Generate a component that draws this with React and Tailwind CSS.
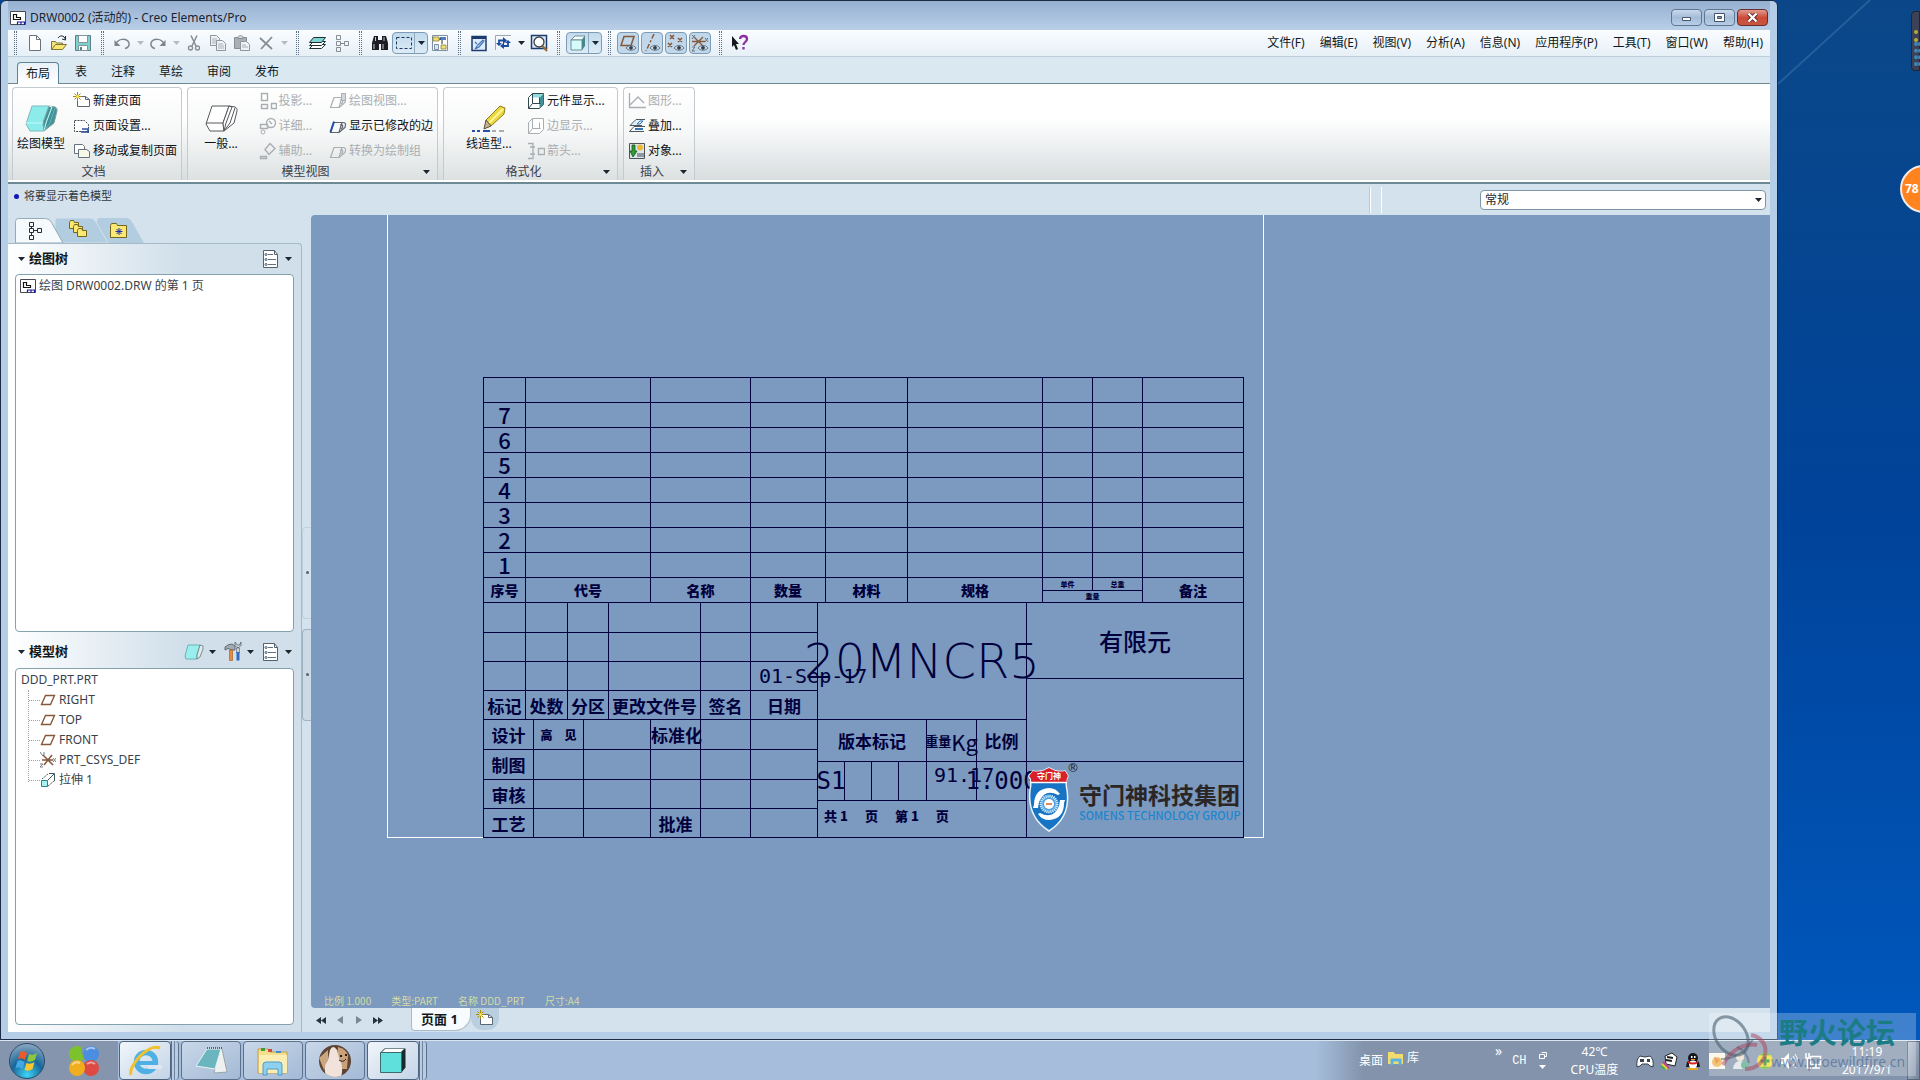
/* ---------- small helpers ---------- */

function Icon({ w = 18, h = 18, box, children }) {
  return (
    <svg
      width={w}
      height={h}
      viewBox={box || `0 0 ${w} ${h}`}
      fill="none"
      className="shrink-0"
      aria-hidden="true"
    >
      {children}
    </svg>
  );
}

function Caret({ color = "#1c2630" }) {
  return (
    <Icon w={7} h={4}>
      <path d="M0 0h7L3.5 4z" fill={color} />
    </Icon>
  );
}

/* ---------- icons ---------- */

const NewIcon = () => (
  <Icon>
    <path d="M3.500 1.500h7l4 4v11h-11z" fill="#fff" stroke="#6b7178" />
    <path d="M10.500 1.500v4h4" stroke="#6b7178" />
  </Icon>
);

const OpenIcon = () => (
  <Icon>
    <path d="M1.500 15.500v-8h4l1 1.500h6v2" fill="#f6e27a" stroke="#7d7440" />
    <path d="M1.500 15.500l4-5h11l-4 5z" fill="#f7e56e" stroke="#7d7440" />
    <path d="M8 4c2-3 6-3 7.500 1.500M15.500 6V2M15.500 6l-3.500-1" stroke="#222b38" />
  </Icon>
);

const SaveIcon = () => (
  <Icon>
    <path d="M1.500 1.500h15v15h-15z" fill="#7fd0ce" stroke="#5a7f86" />
    <path d="M4.500 1.500h9v7h-9z" fill="#fff" stroke="#7d979c" />
    <path d="M4.500 11.500h9v5h-9z" fill="#fff" stroke="#7d979c" />
    <path d="M6 13h2v3H6z" fill="#5a7f86" />
  </Icon>
);

const UndoIcon = ({ flip }) => (
  <Icon>
    <g transform={flip ? "translate(18 0) scale(-1 1)" : undefined}>
      <path d="M3 10c2-6 11-6 13-1 .7 2.500-1 5-4 5.500" stroke="#7d858e" strokeWidth="1.500" />
      <path d="M1.500 6v6h6z" fill="#7d858e" />
    </g>
  </Icon>
);

const CutIcon = () => (
  <Icon>
    <path d="M6 1.500L11 12M12 1.500L7 12" stroke="#858c94" strokeWidth="1.500" />
    <circle cx="5.500" cy="14" r="2" stroke="#858c94" strokeWidth="1.300" />
    <circle cx="12.500" cy="14" r="2" stroke="#858c94" strokeWidth="1.300" />
  </Icon>
);

const CopyIcon = () => (
  <Icon>
    <path d="M1.500 1.500h6l3 3v7h-9z" fill="#eef2f6" stroke="#8e959d" />
    <path d="M3 5h5M3 7h5M3 9h5" stroke="#a9b0b7" />
    <path d="M7.500 6.500h6l3 3v7h-9z" fill="#eef2f6" stroke="#8e959d" />
    <path d="M9 10h5M9 12h6M9 14h6" stroke="#a9b0b7" />
  </Icon>
);

const PasteIcon = () => (
  <Icon>
    <path d="M1.500 3.500h12v11h-12z" fill="#a9afb5" stroke="#878e96" />
    <path d="M5 3.500c0-2.500 5-2.500 5 0v1H5z" fill="#d6dadf" stroke="#878e96" />
    <path d="M7.500 7.500h6l3 3v6h-9z" fill="#eef2f6" stroke="#8e959d" />
    <path d="M9 11h4M9 13h6" stroke="#a9b0b7" />
  </Icon>
);

const DeleteIcon = () => (
  <Icon>
    <path d="M3 4l12 11M15 3L4 15" stroke="#858c94" strokeWidth="1.800" />
  </Icon>
);

const LayersIcon = () => (
  <Icon>
    <path d="M1.500 14.500l4-4h12l-4 4z" fill="#fff" stroke="#1e3338" />
    <path d="M1.500 11.500l4-4h12l-4 4z" fill="#fff" stroke="#1e3338" />
    <path d="M1.500 8.500l4-5h12l-4 5z" fill="#7fd4d2" stroke="#1e3338" />
  </Icon>
);

const TreeIcon = ({ color = "#858c94" }) => (
  <Icon>
    <path d="M4.500 1.500h4v4h-4zM4.500 7.500h4v4h-4zM4.500 13.500h4v4h-4zM12.500 7.500h4v4h-4zM8.500 9.500h4" stroke={color} />
  </Icon>
);

const FindIcon = () => (
  <Icon>
    <path d="M3 2h4v4l1 2v8H1V9zM11 2h4l2 7v7h-7V8l1-2z" fill="#1b1d22" />
    <path d="M7 6h4v4H7z" fill="#1b1d22" />
    <path d="M3 10v5M12 10v5M4.500 3v4M13 3v4" stroke="#c3c9cf" />
  </Icon>
);

const SelectIcon = () => (
  <Icon>
    <path d="M1.500 3.500h15v11h-15z" stroke="#1f3556" strokeDasharray="3 2" />
  </Icon>
);

const FramesIcon = () => (
  <Icon>
    <path d="M1.500 1.500h15v15h-15z" fill="#fff" stroke="#7b8fa5" />
    <path d="M2 3h6v4H2zM10 11h5v4h-5z" fill="#f1e074" stroke="#8d7f36" strokeWidth=".8" />
    <path d="M9 3h6v3H9z" fill="#4f7dc0" />
    <path d="M11 6v4M8 5h2" stroke="#22303c" />
    <path d="M3.500 10.500h4v5h-4z" fill="#dfe6ee" stroke="#7b8fa5" />
  </Icon>
);

const RepaintIcon = () => (
  <Icon>
    <path d="M2 2.500h14v14H2z" fill="#dcebfa" stroke="#1d3c6e" strokeWidth="1.500" />
    <path d="M2 2h14v3H2z" fill="#1d3c6e" />
    <path d="M5 15l4-2 5-6-1-1-5 5zM5 8l2 2" stroke="#4675b5" strokeWidth="1.200" />
  </Icon>
);

const SpinIcon = () => (
  <Icon>
    <path d="M1.500 16V1.500H17" stroke="#9aa8b6" />
    <path d="M5 11V6.500h5M14 7v5H9" stroke="#1b4c9c" strokeWidth="1.800" />
    <path d="M9 3l4 3.500L9 10zM10 8.500V15l-4-3zM2 9h6l-3 3z" fill="#1b4c9c" />
    <path d="M11 9h6l-3-3z" fill="#1b4c9c" />
  </Icon>
);

const ZoomIcon = () => (
  <Icon>
    <path d="M1.500 1.500h15v13h-15z" fill="#dcebfa" stroke="#1d3c6e" strokeWidth="1.500" />
    <circle cx="9" cy="8" r="5" fill="#fff" stroke="#3b3f46" strokeWidth="1.300" />
    <path d="M12.500 12l4.500 5" stroke="#9c6b33" strokeWidth="2.200" />
  </Icon>
);

const CubeIcon = () => (
  <Icon>
    <path d="M2 6l4-4h10l-3 4z" fill="#f4ffff" stroke="#5c7a80" strokeWidth=".8" />
    <path d="M13 6l3-4v10l-3 4z" fill="#45898d" />
    <path d="M2 6h11v10H2z" fill="#d5fafa" stroke="#5c7a80" strokeWidth=".8" />
  </Icon>
);

const Eye = () => (
  <g>
    <path d="M7 14c2.500-3.500 7.500-3.500 10 0-2.500 3-7.500 3-10 0z" fill="#cfdae4" stroke="#54616d" strokeWidth=".8" />
    <circle cx="12" cy="13.800" r="1.900" fill="#2f3e4c" />
  </g>
);

const PlaneEye = () => (
  <Icon>
    <path d="M5 2.500h10l-3 9H2z" stroke="#86583a" strokeWidth="1.500" />
    <Eye />
  </Icon>
);

const AxisEye = () => (
  <Icon>
    <path d="M11 0L3 17" stroke="#86583a" strokeWidth="1.500" strokeDasharray="5 2 2 2" />
    <Eye />
  </Icon>
);

const PointEye = () => (
  <Icon>
    <path d="M3 1l4 4M7 1L3 5M11 4l4 4M15 4l-4 4M1 9l4 4M5 9l-4 4" stroke="#86583a" strokeWidth="1.500" />
    <Eye />
  </Icon>
);

const CsysEye = () => (
  <Icon>
    <path d="M3 3l9 9M12 3l-9 9M1 7.500h13" stroke="#86583a" strokeWidth="1.300" />
    <path d="M1 1l3 3M4 1L1 5M14 4l3 4M17 4l-3 4M1 13h3l-3 4h3" stroke="#68727c" />
    <Eye />
  </Icon>
);

const HelpIcon = () => (
  <Icon>
    <path d="M1 2l7 8H5l2 5-2 1-2-5-2 2z" fill="#16181c" />
    <path d="M9 5c0-4 7-4 7 0 0 3-3.500 3-3.500 6M12.500 13v2.500" stroke="#8c2fa0" strokeWidth="2.300" />
  </Icon>
);

const Sparkle = () => (
  <g>
    <path d="M4.500 0v9M0 4.500h9M1.500 1.500l6 6M7.500 1.500l-6 6" stroke="#a8870c" strokeWidth="1" />
    <circle cx="4.500" cy="4.500" r="1.500" fill="#ffe94a" />
  </g>
);

const NewSheetIcon = () => (
  <Icon>
    <path d="M4.500 4.500h8l4 3v7h-12z" fill="#fff" stroke="#5c6670" />
    <path d="M12.500 4.500v3h4" stroke="#5c6670" />
    <Sparkle />
  </Icon>
);

const SheetSetupIcon = () => (
  <Icon>
    <path d="M1.500 3.500h10l4 4v7h-14z" fill="#fff" stroke="#3d4650" strokeDasharray="2 1" />
    <path d="M8 15h8M9 12h6v4" stroke="#2c4f9e" strokeWidth="1.600" />
  </Icon>
);

const MoveSheetIcon = () => (
  <Icon>
    <path d="M1.500 2.500h8l2 2v7h-10z" fill="#fff" stroke="#68727c" />
    <path d="M5.500 7.500h8l3 2v6h-11z" fill="#f6f8ea" stroke="#68727c" />
  </Icon>
);

const BigBlock = ({ filled }) => (
  <Icon w={34} h={30}>
    <path d="M8 3h17L19 20l1 8H6l-4-7z" fill={filled ? "#8cecec" : "#fff"} stroke={filled ? "#7fb9bd" : "#55585c"} />
    <path d="M25 3l6 1c2 1 2 2 2 4l-3 12-10 8-1-8z" fill={filled ? "#3f9398" : "#fff"} stroke={filled ? "#7f9ea1" : "#55585c"} />
    <path d="M25 3l3 1-6 16-2 8" stroke={filled ? "#d5fbfb" : "#55585c"} />
    <path d="M2 20h17" stroke={filled ? "#c9fafa" : "#55585c"} />
    <path d="M31 5l-5 15-6 8" stroke={filled ? "#69b3b6" : "#55585c"} />
  </Icon>
);

const PencilIcon = () => (
  <Icon w={36} h={30}>
    <path d="M15 17L29 3l5 2-1 6-13 12z" fill="#ecd83a" stroke="#8d7d1e" />
    <path d="M18 20L32 6" stroke="#fff79c" strokeWidth="2" />
    <path d="M15 17l5 6-7 3z" fill="#c9b28e" stroke="#5b5140" />
    <path d="M1 28h3M6 28h3M12 28h7" stroke="#2450a8" strokeWidth="2" />
    <path d="M21 28h4M28 28h5" stroke="#a7adb3" strokeWidth="2" />
  </Icon>
);

const GREY = "#a9aeb2";

const ProjIcon = () => (
  <Icon>
    <path d="M2.500 1.500h6v7h-6zM2.500 12.500h6v4h-6zM12.500 11.500h5v5h-5z" stroke={GREY} strokeWidth="1.400" />
  </Icon>
);

const DetailIcon = () => (
  <Icon>
    <circle cx="12" cy="6" r="4.500" stroke={GREY} strokeWidth="1.400" />
    <path d="M1.500 7.500h7v4h-7zM10 4l3 3" stroke={GREY} strokeWidth="1.400" />
    <circle cx="4" cy="15" r="2" stroke={GREY} />
  </Icon>
);

const AuxIcon = () => (
  <Icon>
    <path d="M11 1.500l5 5-6 6-4-5zM1.500 14.500h6v2h-6z" stroke={GREY} strokeWidth="1.400" />
  </Icon>
);

const ViewIcon = ({ color = GREY, accent, tall }) => (
  <Icon>
    <path d="M5 5.500h8l-3 10H1.500z" stroke={color} strokeWidth="1.200" />
    <path d="M13 5.500c4 0 4 1 3 5l-6 5M11 8c3-1 4 2 1 4" stroke={color} strokeWidth="1.200" />
    {accent && <path d="M5 4.500L1.500 15" stroke="#2450a8" strokeWidth="2" />}
    {tall && <path d="M12.500 1.500h4v7h-4z" fill="#d3d7da" stroke={color} />}
  </Icon>
);

const CompIcon = ({ off }) => (
  <Icon>
    <path d="M1.500 5.500l4-4h11v11l-4 4h-11z" stroke={off ? GREY : "#33474f"} fill="#fff" />
    {!off && <path d="M12.500 5.500l4-4v11l-4 4z" fill="#3f9398" />}
    {!off && <path d="M5.500 2h10l-3 3.500h-7z" fill="#8fdcdc" />}
    <path d="M5.500 1.500v10h8M5.500 11.500l-4 5M12.500 5.500v6" stroke={off ? GREY : "#33474f"} />
  </Icon>
);

const ArrowsIcon = () => (
  <Icon>
    <path d="M1 1.500h5v15H1M3 5h5M3 12h5M11.500 6.500h6v6h-6z" stroke={GREY} strokeWidth="1.300" />
  </Icon>
);

const GraphIcon = () => (
  <Icon>
    <path d="M1.500 1v14.500H18M2 13l8-8 6 6" stroke={GREY} strokeWidth="1.300" />
  </Icon>
);

const OverlayIcon = () => (
  <Icon>
    <path d="M17 9.500H6l-4.500 5H16" stroke="#4d565e" />
    <path d="M17 2.500H8l-6 6h12" fill="#e3f0f9" stroke="#4d565e" />
    <path d="M9 7l3-3h3l-3 3z" stroke="#3576b5" />
    <path d="M7 12h8" stroke="#3576b5" strokeWidth="2" />
  </Icon>
);

const ObjectIcon = () => (
  <Icon>
    <path d="M1.500 1.500h15v15h-15z" fill="#dfe5e9" stroke="#4d5459" />
    <circle cx="12" cy="5.500" r="3" fill="#e9b93a" />
    <path d="M4 3h3v6h2l-4 6-3-6h2z" fill="#2f9a36" stroke="#145419" strokeWidth=".8" />
    <path d="M9 11h7v4H9z" fill="#8d989f" />
  </Icon>
);

const DrwIcon = () => (
  <Icon w={16} h={16}>
    <path d="M.5 1.500h15v13H.5z" fill="#fff" stroke="#4a4a55" />
    <path d="M3.500 4.500v5h7V7.500H6.500v-3z" stroke="#111" strokeWidth="1.200" />
    <path d="M7.500 14.500v-2.500h7v3M11 12v3" stroke="#1b1b9a" strokeWidth="1.200" />
  </Icon>
);

const PlaneIcon = () => (
  <Icon w={16} h={16}>
    <path d="M5.500 3.500h9l-4 9h-9z" stroke="#86583a" strokeWidth="1.400" />
  </Icon>
);

const CsysIcon = () => (
  <Icon w={16} h={16}>
    <path d="M3 3l10 10M12 3L4 13M2 8h11" stroke="#86583a" strokeWidth="1.500" />
    <path d="M0 0l3 4M4 0v3M0 12h3l-3 3h3M13 6l3 4M16 6l-3 4" stroke="#6b747c" strokeWidth=".9" />
  </Icon>
);

const ExtrudeIcon = () => (
  <Icon w={16} h={16}>
    <path d="M1.500 8.500h6v6h-6z" fill="#a9f1ef" stroke="#2c8385" />
    <path d="M2 7l6-5M8 14l6-5" stroke="#3e5a5c" strokeDasharray="2 1" />
    <path d="M8 8l6-6M9 1.500h5.500V9" stroke="#3e5a5c" />
  </Icon>
);

const ListIcon = () => (
  <Icon>
    <path d="M1.500.5h11l3 4v13h-14z" fill="#fff" stroke="#56606a" />
    <path d="M12.500.5v4h3" stroke="#56606a" />
    <path d="M6 4.500h5M6 9.500h8M6 14.500h8" stroke="#5f7286" />
    <circle cx="4" cy="4.500" r="1" stroke="#45576a" />
    <circle cx="4" cy="9.500" r="1" stroke="#45576a" />
    <circle cx="4" cy="14.500" r="1" stroke="#45576a" />
  </Icon>
);

const ToolsIcon = () => (
  <Icon w={18} h={20}>
    <path d="M1 8V5q3-3 7-3l3 2v4H8L4 6.500z" fill="#a3abb2" stroke="#4d565e" strokeWidth=".8" />
    <path d="M5.500 8h3v10.500h-3z" fill="#e88b3a" stroke="#9c5a22" strokeWidth=".6" />
    <path d="M11 0q-1 4 2 5.500h2Q18 4 17 0l-1.500 3h-2z" fill="#c9d0d7" stroke="#59636d" strokeWidth=".8" />
    <path d="M12.500 6h3v5h-3z" fill="#c9d0d7" stroke="#59636d" strokeWidth=".6" />
    <path d="M12.500 10h3v8.500h-3z" fill="#2d6bc4" />
  </Icon>
);

const SmallBlock = () => (
  <Icon w={20} h={18}>
    <path d="M4 2h12l-3 10v4H2l-1-3z" fill="#9aefee" stroke="#5ea3a8" strokeWidth=".8" />
    <path d="M16 2l3 1v3l-3 8-3 2v-4z" fill="#dcecec" stroke="#68797a" strokeWidth=".8" />
  </Icon>
);

const FoldersIcon = () => (
  <Icon w={20} h={20}>
    {[0, 4, 8].map((d) => (
      <path key={d} d={`M${d + 1}.5 ${d + 2}.5l1-2h3l1 2h4v6h-9z`} fill="#fbe872" stroke="#75661f" />
    ))}
  </Icon>
);

const FavIcon = () => (
  <Icon>
    <path d="M.5 3.500l1-2h5l1 2h9v12H.5z" fill="#fbe872" stroke="#75661f" />
    <path d="M9 6v7M5.500 9.500h7M6.500 7l5 5M11.500 7l-5 5" stroke="#1e2fa8" />
  </Icon>
);

/* ---------- top bars ---------- */

function WindowButton({ label, red, children }) {
  return (
    <button
      aria-label={label}
      className={
        red
          ? "flex h-[17px] w-[31px] items-center justify-center rounded-sm border border-[#6b2a2c] bg-linear-to-b from-[#e09a8e] via-[#cc4a38] to-[#c8563f]"
          : "flex h-[17px] w-[31px] items-center justify-center rounded-sm border border-[#5f7690] bg-linear-to-b from-[#c8d9ec] via-[#a5bcd8] to-[#b8cde5]"
      }
    >
      {children}
    </button>
  );
}

function TitleBar() {
  return (
    <header className="flex h-[29px] items-center bg-linear-to-b from-[#96b0d0] to-[#b9cfe8] pr-[2px] pl-[2px] pt-1">
      <DrwIcon />
      <h1 className="ml-1 flex-1 text-[12px] text-[#1a2430]">DRW0002 (活动的) - Creo Elements/Pro</h1>
      <div className="flex gap-[2px]">
        <WindowButton label="最小化">
          <Icon w={11} h={9}>
            <path d="M1.500 4.500h8v3h-8z" fill="#fff" stroke="#45566c" />
          </Icon>
        </WindowButton>
        <WindowButton label="最大化">
          <Icon w={11} h={9}>
            <path d="M.5.5h10v8H.5z" fill="#fff" stroke="#45566c" />
            <path d="M3.500 3.500h4v2h-4z" fill="#8aa2c0" stroke="#45566c" />
          </Icon>
        </WindowButton>
        <WindowButton label="关闭" red>
          <Icon w={11} h={9}>
            <path d="M1.500.5l8 8M9.500.5l-8 8" stroke="#5b2326" strokeWidth="4" />
            <path d="M1.500.5l8 8M9.500.5l-8 8" stroke="#fff" strokeWidth="2.300" />
          </Icon>
        </WindowButton>
      </div>
    </header>
  );
}

function Grip() {
  return (
    <div className="flex w-[15px] shrink-0 justify-center">
      <div className="h-6 w-[3px] border-x border-dotted border-[#5d7186]" />
    </div>
  );
}

function Tool({ label, children }) {
  return (
    <button aria-label={label} className="flex h-6 w-6 shrink-0 items-center justify-center">
      {children}
    </button>
  );
}

function ToolCaret({ off }) {
  return (
    <span className="flex w-3 shrink-0 justify-center">
      <Caret color={off ? "#b3bcc5" : "#1c2630"} />
    </span>
  );
}

function SplitTool({ label, children }) {
  return (
    <button
      aria-label={label}
      className="flex h-[22px] w-9 shrink-0 items-center rounded-sm border border-[#7d9bb5] bg-linear-to-b from-[#c2daec] to-[#dcecf7]"
    >
      <span className="flex h-full w-[22px] items-center justify-center border-r border-[#8fabc2]">{children}</span>
      <ToolCaret />
    </button>
  );
}

function Toggle({ label, children }) {
  return (
    <button
      aria-label={label}
      className="mr-[2px] flex h-[22px] w-[22px] shrink-0 items-center justify-center rounded-sm border border-[#7d9bb5] bg-[#c0d8ea]"
    >
      {children}
    </button>
  );
}

const menus = ["文件(F)", "编辑(E)", "视图(V)", "分析(A)", "信息(N)", "应用程序(P)", "工具(T)", "窗口(W)", "帮助(H)"];

function ToolBar() {
  return (
    <div className="flex h-[27px] items-center justify-between border-b border-[#bccddb] bg-linear-to-b from-[#fafdff] to-[#e6f0f7]">
      <div className="flex items-center">
        <Grip />
        <Tool label="新建"><NewIcon /></Tool>
        <Tool label="打开"><OpenIcon /></Tool>
        <Tool label="保存"><SaveIcon /></Tool>
        <Grip />
        <Tool label="撤消"><UndoIcon /></Tool>
        <ToolCaret off />
        <Tool label="重做"><UndoIcon flip /></Tool>
        <ToolCaret off />
        <Tool label="剪切"><CutIcon /></Tool>
        <Tool label="复制"><CopyIcon /></Tool>
        <Tool label="粘贴"><PasteIcon /></Tool>
        <Tool label="删除"><DeleteIcon /></Tool>
        <ToolCaret off />
        <Grip />
        <Tool label="层"><LayersIcon /></Tool>
        <Tool label="树"><TreeIcon /></Tool>
        <Grip />
        <Tool label="查找"><FindIcon /></Tool>
        <SplitTool label="选取"><SelectIcon /></SplitTool>
        <Tool label="选项"><FramesIcon /></Tool>
        <Grip />
        <Tool label="重画"><RepaintIcon /></Tool>
        <Tool label="更新"><SpinIcon /></Tool>
        <ToolCaret />
        <Tool label="缩放"><ZoomIcon /></Tool>
        <Grip />
        <SplitTool label="着色"><CubeIcon /></SplitTool>
        <Grip />
        <Toggle label="平面显示"><PlaneEye /></Toggle>
        <Toggle label="轴显示"><AxisEye /></Toggle>
        <Toggle label="点显示"><PointEye /></Toggle>
        <Toggle label="坐标系显示"><CsysEye /></Toggle>
        <Grip />
        <Tool label="帮助"><HelpIcon /></Tool>
      </div>
      <nav className="flex gap-[15px] pr-[7px] text-[12px] text-[#101820]">
        {menus.map((m) => (
          <button key={m} className="whitespace-nowrap">{m}</button>
        ))}
      </nav>
    </div>
  );
}

const tabs = ["布局", "表", "注释", "草绘", "审阅", "发布"];

function TabRow() {
  return (
    <div className="flex h-[27px] items-end gap-2 border-b border-[#6d8a94] bg-[#dae8f2] pl-[9px] text-[12px] text-[#101820]">
      {tabs.map((t, i) => (
        <button
          key={t}
          className={
            i === 0
              ? "-mb-px h-[22px] rounded-t border border-b-0 border-[#5e8296] bg-linear-to-b from-[#eaf2f8] to-white px-2"
              : "h-[22px] px-2"
          }
        >
          {t}
        </button>
      ))}
    </div>
  );
}

/* ---------- ribbon ---------- */

function Item({ icon, off, children }) {
  return (
    <button
      className={
        off
          ? "flex h-[25px] items-center gap-[2px] whitespace-nowrap text-[#a9aeb2]"
          : "flex h-[25px] items-center gap-[2px] whitespace-nowrap text-[#0c1218]"
      }
    >
      {icon}
      {children}
    </button>
  );
}

function BigItem({ icon, children }) {
  return (
    <button className="flex flex-col items-center gap-[2px] pt-[15px] whitespace-nowrap text-[#0c1218]">
      {icon}
      {children}
    </button>
  );
}

function Group({ label, caret, width, children }) {
  return (
    <section
      className={`${width} flex h-[93px] flex-col rounded-t border-x border-t border-[#c3cbd0] bg-linear-to-b from-white via-[#f6f7f7] to-[#dde1e2] text-[12px] leading-[18px]`}
    >
      <div className="flex flex-1 px-1">{children}</div>
      <div className="flex h-[19px] items-center pr-[7px] text-[#38424a]">
        <span className="flex-1 text-center">{label}</span>
        {caret && <Caret />}
      </div>
    </section>
  );
}

function Ribbon() {
  return (
    <div className="h-[100px] border-b-[2px] border-[#6d8a94] bg-white">
      <div className="flex h-[96px] gap-[5px] bg-linear-to-b from-white from-35% to-[#d8dddf] pt-[3px] pl-1">
        <Group label="文档" width="w-[170px]">
          <BigItem icon={<BigBlock filled />}>绘图模型</BigItem>
          <div className="ml-2 flex flex-col">
            <Item icon={<NewSheetIcon />}>新建页面</Item>
            <Item icon={<SheetSetupIcon />}>页面设置...</Item>
            <Item icon={<MoveSheetIcon />}>移动或复制页面</Item>
          </div>
        </Group>
        <Group label="模型视图" width="w-[251px]" caret>
          <div className="w-[67px] pl-3">
            <BigItem icon={<BigBlock />}>一般...</BigItem>
          </div>
          <div className="flex w-[71px] flex-col">
            <Item icon={<ProjIcon />} off>投影...</Item>
            <Item icon={<DetailIcon />} off>详细...</Item>
            <Item icon={<AuxIcon />} off>辅助...</Item>
          </div>
          <div className="flex flex-col">
            <Item icon={<ViewIcon tall />} off>绘图视图...</Item>
            <Item icon={<ViewIcon color="#5b6670" accent />}>显示已修改的边</Item>
            <Item icon={<ViewIcon />} off>转换为绘制组</Item>
          </div>
        </Group>
        <Group label="格式化" width="w-[175px]" caret>
          <div className="w-[79px] pl-[18px]">
            <BigItem icon={<PencilIcon />}>线造型...</BigItem>
          </div>
          <div className="flex flex-col">
            <Item icon={<CompIcon />}>元件显示...</Item>
            <Item icon={<CompIcon off />} off>边显示...</Item>
            <Item icon={<ArrowsIcon />} off>箭头...</Item>
          </div>
        </Group>
        <Group label="插入" width="w-[72px]" caret>
          <div className="flex flex-col">
            <Item icon={<GraphIcon />} off>图形...</Item>
            <Item icon={<OverlayIcon />}>叠加...</Item>
            <Item icon={<ObjectIcon />}>对象...</Item>
          </div>
        </Group>
      </div>
    </div>
  );
}

function MessageBar() {
  return (
    <div className="flex h-[31px] items-center bg-[#d3e2ec] pr-1">
      <p className="flex flex-1 items-center gap-[5px] self-start pt-1 pl-[6px] text-[11px] text-[#2f3942]">
        <span className="h-[5px] w-[5px] rounded-full bg-[#1414b8]" />
        将要显示着色模型
      </p>
      <div className="mr-[98px] h-[26px] w-3 border-x border-white shadow-[-1px_0_0_#b9c9d4]" />
      <div className="relative w-[286px]">
        <select
          aria-label="过滤器"
          className="block h-5 w-full appearance-none rounded-sm border border-[#7d95a4] bg-white pl-1 text-[12px] leading-4 text-[#1f2830]"
        >
          <option>常规</option>
        </select>
        <span className="pointer-events-none absolute top-2 right-1">
          <Caret />
        </span>
      </div>
    </div>
  );
}

/* ---------- left panel ---------- */

function PanelTabs() {
  return (
    <div className="flex h-7 items-end pl-[7px]">
      <svg width="130" height="25" viewBox="0 0 130 25" fill="none" aria-hidden="true">
        <path d="M82 25V3q0-3 3-3h26q4 0 6 4l12 21z" fill="#b3cde0" />
        <path d="M40 25V3q0-3 3-3h32q4 0 6 4l12 21z" fill="#b3cde0" stroke="#cfe0ec" />
        <path d="M.5 25V3.500q0-3 3-3h27q4 0 6 4L48 25z" fill="#f6fafd" stroke="#96abb9" />
        <g transform="translate(10 3)">
          <path d="M4.500 1.500h4v4h-4zM4.500 7.500h4v4h-4zM4.500 14.500h4v4h-4zM12.500 7.500h4v4h-4zM8.500 9.500h4M6.500 5.500v2M6.500 11.500v3" stroke="#22303c" />
        </g>
        <g transform="translate(53 2)"><FoldersIcon /></g>
        <g transform="translate(95 4)"><FavIcon /></g>
      </svg>
    </div>
  );
}

function PanelHeader({ title, children }) {
  return (
    <div className="flex items-center pr-[9px] pl-[10px]">
      <Caret />
      <h2 className="ml-1 flex-1 text-[13px] font-bold text-[#101820]">{title}</h2>
      <div className="flex items-center gap-2">{children}</div>
    </div>
  );
}

function HeaderTool({ label, children }) {
  return (
    <button aria-label={label} className="flex items-center gap-[5px]">
      {children}
      <Caret />
    </button>
  );
}

const features = [
  { name: "RIGHT", icon: <PlaneIcon /> },
  { name: "TOP", icon: <PlaneIcon /> },
  { name: "FRONT", icon: <PlaneIcon /> },
  { name: "PRT_CSYS_DEF", icon: <CsysIcon /> },
  { name: "拉伸 1", icon: <ExtrudeIcon /> },
];

function Sidebar() {
  return (
    <aside className="flex w-[303px] shrink-0">
      <div className="flex flex-1 flex-col">
        <PanelTabs />
        <div className="flex flex-1 flex-col rounded-tr border-t border-r border-[#a5b9c6] bg-linear-to-r from-white to-[#d0dfea] to-60% pb-[7px]">
          <div className="flex h-[30px] flex-col justify-center">
            <PanelHeader title="绘图树">
              <HeaderTool label="设置"><ListIcon /></HeaderTool>
            </PanelHeader>
          </div>
          <div className="mx-[7px] h-[358px] rounded border border-[#84a2ae] bg-white px-1 pt-[2px] text-[12px] leading-[18px] text-[#39424a]">
            <div className="flex items-center gap-[3px]">
              <DrwIcon />
              绘图 DRW0002.DRW 的第 1 页
            </div>
          </div>
          <div className="flex h-9 flex-col justify-center pt-1">
            <PanelHeader title="模型树">
              <HeaderTool label="显示"><SmallBlock /></HeaderTool>
              <HeaderTool label="工具"><ToolsIcon /></HeaderTool>
              <HeaderTool label="设置"><ListIcon /></HeaderTool>
            </PanelHeader>
          </div>
          <div className="mx-[7px] flex-1 rounded border border-[#84a2ae] bg-white pt-[1px] pl-[5px] text-[12px] leading-5 text-[#39424a]">
            <p>DDD_PRT.PRT</p>
            <ul className="ml-[7px] h-[92px] border-l border-dotted border-[#98a2aa]">
              {features.map((f) => (
                <li key={f.name} className="flex h-5 items-center">
                  <span className="w-[11px] border-t border-dotted border-[#98a2aa]" />
                  {f.icon}
                  <span className="ml-[3px]">{f.name}</span>
                </li>
              ))}
            </ul>
          </div>
        </div>
      </div>
      <div className="flex w-[9px] flex-col justify-center">
        <div className="flex h-[92px] items-center justify-center rounded-l border border-r-0 border-[#c0d0dc]">
          <span className="h-[3px] w-[3px] rounded-full bg-[#56636e]" />
        </div>
        <div className="mt-[10px] flex h-[92px] items-center justify-center rounded-l border border-r-0 border-[#9eb3c2] bg-[#cbdae5]">
          <span className="h-[3px] w-[3px] rounded-full bg-[#56636e]" />
        </div>
      </div>
    </aside>
  );
}

/* ---------- drawing ---------- */

const cell = "border-t border-l border-[#00003c] p-0 leading-none whitespace-nowrap";

function PartsList() {
  return (
    <table className="w-full table-fixed border-separate border-spacing-0 text-center">
      <colgroup>
        <col className="w-[42px]" />
        <col className="w-[125px]" />
        <col className="w-[100px]" />
        <col className="w-[75px]" />
        <col className="w-[82px]" />
        <col className="w-[135px]" />
        <col className="w-[50px]" />
        <col className="w-[50px]" />
        <col />
      </colgroup>
      <tbody>
        {["", "7", "6", "5", "4", "3", "2", "1"].map((n) => (
          <tr key={n} className="h-[25px]">
            <td className={`${cell} pb-[2px] text-[22px] font-medium`}>{n}</td>
            {[1, 2, 3, 4, 5, 6, 7, 8].map((c) => (
              <td key={c} className={cell} />
            ))}
          </tr>
        ))}
      </tbody>
      <tfoot className="text-[14px] font-black">
        <tr className="h-[13px]">
          {["序号", "代号", "名称", "数量", "材料", "规格"].map((h) => (
            <th key={h} rowSpan={2} className={`${cell} font-black`}>{h}</th>
          ))}
          <th className={`${cell} text-[7px] font-black`}>单件</th>
          <th className={`${cell} text-[7px] font-black`}>总重</th>
          <th rowSpan={2} className={`${cell} font-black`}>备注</th>
        </tr>
        <tr className="h-3">
          <th colSpan={2} className={`${cell} text-[7px] font-black`}>重量</th>
        </tr>
      </tfoot>
    </table>
  );
}

function RevisionTable() {
  return (
    <table className="w-full table-fixed border-separate border-spacing-0 text-[17px]">
      <colgroup>
        <col className="w-[42px]" />
        <col className="w-[42px]" />
        <col className="w-[41px]" />
        <col className="w-[92px]" />
        <col className="w-[50px]" />
        <col />
      </colgroup>
      <tbody>
        {["", "", "01-Sep-17"].map((date, i) => (
          <tr key={i} className={i === 0 ? "h-[30px]" : "h-[29px]"}>
            {[1, 2, 3, 4, 5].map((c) => (
              <td key={c} className={cell} />
            ))}
            <td className={`${cell} pl-2 font-['DejaVu_Sans_Mono',monospace] text-[20px]`}>{date}</td>
          </tr>
        ))}
        <tr className="h-[29px]">
          {["标记", "处数", "分区", "更改文件号", "签名", "日期"].map((h) => (
            <th key={h} className={`${cell} text-center font-bold`}>{h}</th>
          ))}
        </tr>
      </tbody>
    </table>
  );
}

const signRows = [
  ["设计", "标准化"],
  ["制图", ""],
  ["审核", ""],
  ["工艺", "批准"],
];

function SignTable() {
  return (
    <table className="w-full table-fixed border-separate border-spacing-0 text-center text-[17px]">
      <colgroup>
        <col className="w-[50px]" />
        <col className="w-[50px]" />
        <col className="w-[67px]" />
        <col className="w-[50px]" />
        <col className="w-[50px]" />
        <col />
      </colgroup>
      <tbody>
        {signRows.map(([a, b], i) => (
          <tr key={a} className={i < 2 ? "h-[30px]" : "h-[29px]"}>
            <th className={`${cell} font-bold`}>{a}</th>
            <td className={`${cell} text-[12px] font-black`}>
              {i === 0 && (
                <span className="flex justify-center gap-3">
                  <span>高</span>
                  <span>见</span>
                </span>
              )}
            </td>
            <td className={cell} />
            <th className={`${cell} font-bold`}>{b}</th>
            <td className={cell} />
            <td className={cell} />
          </tr>
        ))}
      </tbody>
    </table>
  );
}

const box = "flex items-center justify-center border-t border-l border-[#00003c] leading-none whitespace-nowrap";

function Shield() {
  return (
    <svg width="42" height="66" viewBox="0 0 42 66" fill="none" className="shrink-0" aria-hidden="true">
      <path d="M5 4q8 2 16-3 8 5 16 3l3 5q-3 5-1 14 4 27-18 41Q-1 50 2 23 4 14 1 9z" fill="#1773c4" stroke="#e8f2fa" strokeWidth="1.500" />
      <path d="M5 4q8 2 16-3 8 5 16 3l3 5q-2 3-1.500 6h-35Q4 12 1 9z" fill="#d8202c" />
      <path d="M3 15.500h36" stroke="#fff" strokeWidth="1.500" />
      <text x="21" y="12" textAnchor="middle" fontSize="8" fontWeight="700" fill="#fff">守门神</text>
      <circle cx="21" cy="37" r="9" fill="#4fa3e0" />
      <circle cx="21" cy="37" r="8" stroke="#d7ecfa" strokeWidth="3" strokeDasharray="1 1" />
      <circle cx="21" cy="37" r="5" fill="#fff" />
      <path d="M18 37h6" stroke="#d8602c" strokeWidth="1.500" />
      <path d="M6 38q0-16 15-17 7 0 11 6l-2 1q-13-7-19 7l-1 6h-5z" fill="#fff" />
      <path d="M36 36q0 16-15 17-7 0-11-6l2-1q13 7 19-7l1-6h5z" fill="#fff" />
    </svg>
  );
}

function TitleBlock() {
  return (
    <div className="flex">
      <div className="w-[334px]">
        <RevisionTable />
        <SignTable />
      </div>
      <div className="flex w-[209px] flex-col">
        <div className={`${box} h-[117px] font-['DejaVu_Sans',sans-serif] text-[48px] font-extralight`}>20MNCR5</div>
        <div className="flex h-[42px] text-[17px] font-bold">
          <div className={`${box} w-[109px]`}>版本标记</div>
          <div className={`${box} w-[50px] text-[13px]`}>
            重量<span className="text-[22px] font-normal">Kg</span>
          </div>
          <div className={`${box} w-[50px]`}>比例</div>
        </div>
        <div className="flex h-[39px] font-['DejaVu_Sans_Mono',monospace] text-[24px]">
          <div className={`${box} w-[27px]`}>S1</div>
          <div className={`${box} w-[27px]`} />
          <div className={`${box} w-[27px]`} />
          <div className={`${box} w-7`} />
          <div className={`${box} w-[50px] justify-start pb-3 pl-[7px] text-[20px]`}>91.17</div>
          <div className={`${box} w-[50px]`}>1.000</div>
        </div>
        <div className={`${box} flex-1 justify-start gap-[17px] pb-2 pl-[6px] text-[13px] font-black`}>
          <span>共 1</span>
          <span>页</span>
          <span>第 1</span>
          <span>页</span>
        </div>
      </div>
      <div className="flex w-[217px] flex-col">
        <div className={`${box} h-[76px] text-[24px] font-medium`}>有限元</div>
        <div className={`${box} h-[83px]`} />
        <div className={`${box} flex-1 justify-start pl-px`}>
          <Shield />
          <span className="-ml-[3px] self-start font-['DejaVu_Sans',sans-serif] text-[12px] text-[#222]">®</span>
          <div className="flex flex-col gap-1 pt-1">
            <span className="text-[23px] font-bold text-[#2b2626]">守门神科技集团</span>
            <span className="text-[11px] font-medium text-[#1b86cf]">SOMENS TECHNOLOGY GROUP</span>
          </div>
        </div>
      </div>
    </div>
  );
}

function Canvas() {
  return (
    <div className="flex flex-1 flex-col justify-between rounded-tl rounded-bl bg-[#7c99bf] font-['Noto_Sans_CJK_SC',sans-serif]">
      <div className="ml-[76px] w-[877px] border-x border-b border-white pt-[162px] pl-[95px]">
        <div className="-mb-px w-[761px] border-r border-b border-[#00003c] text-[#00003c]">
          <PartsList />
          <TitleBlock />
        </div>
      </div>
      <div className="flex gap-5 pl-[13px] text-[10px] leading-[15px] text-[#d5dba4]">
        <span>比例 1.000</span>
        <span>类型:PART</span>
        <span>名称 DDD_PRT</span>
        <span>尺寸:A4</span>
      </div>
    </div>
  );
}

function SheetTabs() {
  return (
    <div className="flex h-6 items-start bg-[#d3e2ec] pl-[5px]">
      <div className="flex h-full w-[95px] items-center gap-[11px]">
        <button aria-label="第一页">
          <Icon w={10} h={7}><path d="M5 0v7L0 3.500zM10 0v7L5 3.500z" fill="#27323c" /></Icon>
        </button>
        <button aria-label="上一页">
          <Icon w={7} h={8}><path d="M6 0v8L0 4z" fill="#7b8894" /></Icon>
        </button>
        <button aria-label="下一页">
          <Icon w={7} h={8}><path d="M1 0v8l6-4z" fill="#7b8894" /></Icon>
        </button>
        <button aria-label="最后一页">
          <Icon w={10} h={7}><path d="M0 0v7l5-3.500zM5 0v7l5-3.500z" fill="#27323c" /></Icon>
        </button>
      </div>
      <button className="h-[23px] rounded-b rounded-br-2xl border border-t-0 border-[#a9bcc9] bg-[#f8fbfd] pr-3 pl-[9px] text-[13px] leading-[22px] font-bold text-[#101820]">
        页面 1
      </button>
      <button aria-label="新建页面" className="flex h-[22px] w-7 items-start justify-center rounded-b-xl bg-[#b9cfe0] pt-[2px]">
        <NewSheetIcon />
      </button>
    </div>
  );
}

/* ---------- desktop ---------- */

function Desktop() {
  return (
    <div className="relative w-[142px] shrink-0 overflow-hidden bg-linear-to-b from-[#0b4788] via-[#00439a] to-[#0058bd]">
      <svg className="absolute top-0 left-0" width="142" height="120" aria-hidden="true">
        <path d="M92 0L0 84" stroke="#4f83b5" strokeOpacity=".4" strokeWidth="2" />
      </svg>
      <div className="absolute top-[11px] right-0 h-[60px] w-[9px] rounded-l-sm border border-[#20242e] bg-[#3b4257] p-[2px]">
        <div className="mt-4 h-3 border-y-4 border-dotted border-[#b3a93c]" />
        <div className="h-6 border-x-4 border-dotted border-[#3d86b8]" />
      </div>
      <div className="absolute top-[165px] -right-7 h-12 w-12 rounded-full border-2 border-[#f5ece4] bg-[#ff8420] pl-[3px] text-[12px] leading-[44px] font-bold text-white">
        78
      </div>
    </div>
  );
}

function TaskButton({ label, active, stack, children }) {
  return (
    <div className="flex">
      <button
        aria-label={label}
        className={
          active
            ? "flex h-[39px] w-[52px] items-center justify-center rounded-sm border border-[#4d637e] bg-linear-to-br from-[#f1f6fb] to-[#c3d3e6]"
            : "flex h-[39px] w-[60px] items-center justify-center rounded-sm border border-[#5b718c] bg-linear-to-br from-[#c9d8e9] to-[#a3b9d5]"
        }
      >
        {children}
      </button>
      {stack && (
        <div className="h-[39px] w-2 rounded-r-sm border-x border-[#5b718c] bg-[#b9cbe0] pl-[2px]">
          <div className="h-full w-px bg-[#6f859f]" />
        </div>
      )}
    </div>
  );
}

function Taskbar() {
  return (
    <footer className="flex h-10 items-center border-t border-[#d9e6f2] bg-[#a6bedb]">
      <div className="flex h-full w-[118px] items-center gap-[23px] bg-[#8595ae] pl-[9px]">
        <button aria-label="开始">
          <Icon w={36} h={36}>
            <defs>
              <radialGradient id="orb" cx=".5" cy=".9" r=".9">
                <stop offset="0" stopColor="#3fd4f5" />
                <stop offset=".5" stopColor="#16679b" />
                <stop offset="1" stopColor="#8fa9c2" />
              </radialGradient>
            </defs>
            <circle cx="18" cy="18" r="17.500" fill="url(#orb)" stroke="#2c4a6b" />
            <path d="M11 9q4-2 7 1l-2 7q-4-3-7-1z" fill="#ea5a2a" />
            <path d="M20 11q4 2 8-1l-2 7q-4 3-8 1z" fill="#8ac63e" />
            <path d="M8.500 18q3-2 7 1l-2 7q-3-3-7-1z" fill="#46a7e6" />
            <path d="M17.500 20q4 2 8-1l-2 7q-4 3-8 1z" fill="#fbc72e" />
          </Icon>
        </button>
        <button aria-label="应用">
          <Icon w={32} h={32}>
            <defs>
              <mask id="petal">
                <path d="M0 0h32v32H0z" fill="#fff" />
                <circle cx="18" cy="6" r="5" fill="#000" />
              </mask>
            </defs>
            <circle cx="9" cy="9" r="8" fill="#7cc22c" mask="url(#petal)" />
            <circle cx="23" cy="9" r="8" fill="#4b8de0" />
            <circle cx="23" cy="23" r="8" fill="#dc4a43" />
            <circle cx="9" cy="23" r="8" fill="#f0ae1f" />
            <path d="M18 5q4-4 9-1M19 19q4-3 8 0M4 20q3-4 8-2" stroke="#fff" strokeOpacity=".5" strokeWidth="2" />
          </Icon>
        </button>
      </div>
      <div className="ml-px flex gap-[2px]">
        <TaskButton label="浏览器" active stack>
          <Icon w={34} h={34}>
            <circle cx="18" cy="18" r="9.500" stroke="#4fb0e4" strokeWidth="5.500" />
            <path d="M9 19h21" stroke="#4fb0e4" strokeWidth="4" />
            <path d="M20 21h14v4H20z" fill="#dbe7f3" />
            <path d="M3 31C0 22 20-1 32 4" stroke="#f0c22e" strokeWidth="3" />
          </Icon>
        </TaskButton>
        <TaskButton label="记事本">
          <Icon w={34} h={32}>
            <path d="M25 4h3l5 23-13 1z" fill="#eef1f0" stroke="#8c979b" strokeWidth=".8" />
            <path d="M13 4h14l-6 20L2 21z" fill="#6bb5bf" stroke="#e8f3f5" />
            <path d="M13 3h15" stroke="#55636b" strokeWidth="2" strokeDasharray="1 1" />
          </Icon>
        </TaskButton>
        <TaskButton label="资源管理器">
          <Icon w={34} h={32}>
            <path d="M2 4h10l2 3h17v21H2z" fill="#f6df8c" stroke="#c39f45" />
            <path d="M5 3h4v3H5z" fill="#3f9b3f" />
            <path d="M12 4h4v3h-4z" fill="#cf4a3c" />
            <path d="M20 6h5v2h-5z" fill="#3f8ad0" />
            <path d="M3 10h28v18H3z" fill="#fbeeb4" />
            <path d="M7 30V20q0-3 3-3h13q3 0 3 3v10h-4v-6H11v6z" fill="#8fd0ee" stroke="#4c9cc7" />
          </Icon>
        </TaskButton>
        <TaskButton label="照片">
          <Icon w={34} h={34}>
            <defs><clipPath id="photo"><circle cx="17" cy="17" r="16" /></clipPath></defs>
            <g clipPath="url(#photo)">
              <path d="M0 0h34v34H0z" fill="#5d4433" />
              <path d="M1 14l9-8v10l-4 10z" fill="#caa77e" />
              <path d="M20 3q8 2 10 8l-1 14H18z" fill="#c9a27c" />
              <path d="M12 6q3-6 7 0l2 8q5 8 2 20H9q-5-10 1-18z" fill="#f1e3dc" />
              <path d="M22 11h2v2h-2zM27 10h2v2h-2z" fill="#2c1b12" />
              <path d="M21 16q4 3 7-1" stroke="#2c1b12" />
            </g>
          </Icon>
        </TaskButton>
        <TaskButton label="Creo" active stack>
          <Icon w={28} h={28}>
            <path d="M1.500 5.500l4-4h21v19l-4 5z" fill="#1a2a2c" />
            <path d="M3 5l3-3h19l-3 3z" fill="#fff" />
            <path d="M1.500 5.500h21v20h-21z" fill="#5fe0dc" stroke="#3b6b6c" />
          </Icon>
        </TaskButton>
      </div>
      <div className="ml-auto flex h-full w-[604px] items-center bg-linear-to-r from-[#a6bedb] to-[#8293ab] to-8% text-[12px] text-white">
        <span className="ml-[43px]">桌面</span>
        <span className="ml-1 flex items-center gap-[2px] pb-[6px]">
          <Icon w={18} h={16}>
            <path d="M1 2h6l1 2h8v10H1z" fill="#f4dc6c" />
            <path d="M5 15v-5h8v5" stroke="#5ab3e0" strokeWidth="3" />
          </Icon>
          库
        </span>
        <button aria-label="更多" className="ml-[76px] pb-5 text-[14px] leading-none">»</button>
        <span className="ml-[10px] font-['Liberation_Mono',monospace]">CH</span>
        <span className="ml-3 flex flex-col items-center gap-[6px]">
          <Icon w={8} h={7}><path d="M2.500.5h5v4h-2M.5 2.500h5v4h-5z" stroke="#fff" /></Icon>
          <Caret color="#fff" />
        </span>
        <div className="ml-6 flex flex-col items-center text-[12px] leading-[18px]">
          <span>42℃</span>
          <span>CPU温度</span>
        </div>
        <div className="ml-[18px] flex items-center gap-[6px]">
          <Icon>
            <path d="M4 4q5 2 10 0 4 3 3 11l-3-1-2-2H6l-2 2-3 1Q0 7 4 4z" fill="#fff" stroke="#33404d" />
            <path d="M4 7h4v3H4zM11 7h3v3h-3z" fill="#33404d" />
          </Icon>
          <Icon>
            <path d="M5 4l7-3 5 4-2 9-9-2z" fill="#fff" stroke="#222" />
            <path d="M7 5l6 1M6 8l6 1" stroke="#222" strokeWidth="2" />
            <path d="M3 10l6 6" stroke="#c8408c" strokeWidth="2" />
            <path d="M2 12l5 5" stroke="#e8d43c" strokeWidth="2" />
            <path d="M1 14l4 3" stroke="#47b04a" strokeWidth="2" />
          </Icon>
          <Icon>
            <circle cx="9" cy="6" r="5" fill="#15171b" />
            <path d="M3 10q6-4 12 0l1 5H2z" fill="#15171b" />
            <circle cx="9" cy="12.500" r="4" fill="#fff" />
            <path d="M4 9q5 3 10 0v2q-5 3-10 0z" fill="#d92525" />
            <path d="M7 4h1.500v2H7zM10 4h1.500v2H10z" fill="#fff" />
            <path d="M4 16h10v2H4zM7 7h4v1H7z" fill="#eba824" />
          </Icon>
          <Icon>
            <path d="M1 1h16v16H1z" fill="#fdf6e6" />
            <circle cx="9" cy="10" r="5" fill="#f0b24c" />
            <path d="M6 5l6 3-4 4z" fill="#e2872a" />
          </Icon>
          <Icon>
            <circle cx="8" cy="5" r="4" fill="#eadfce" />
            <path d="M1 17q1-8 7-8t7 8z" fill="#dfe3e6" />
            <circle cx="13" cy="13" r="4" fill="#58a88c" />
          </Icon>
          <Icon>
            <circle cx="9" cy="9" r="8" fill="#f3dc2f" />
            <path d="M3 3q6-4 12 0-6 1-12 0zM3 15q6 4 12 0-6-1-12 0z" fill="#5fb336" />
            <path d="M9 4.500v9M4.500 9h9" stroke="#2d8c33" strokeWidth="3" />
          </Icon>
          <Icon>
            <path d="M1 6h3l5-5v16l-5-5H1z" fill="#fff" />
            <path d="M11 6q2 3 0 6M13 4q4 5 0 10M15 2q5 7 0 14" stroke="#fff" />
          </Icon>
          <Icon>
            <path d="M6.500 4.500h10v8h-10z" fill="#8293ab" stroke="#fff" strokeWidth="1.500" />
            <path d="M8 16h8M12 12v4M2 1v5h3V1M3.500 6v10H7" stroke="#fff" strokeWidth="1.500" />
          </Icon>
        </div>
        <div className="ml-auto flex flex-col items-center pr-[15px] text-[12px] leading-[18px]">
          <span>11:19</span>
          <span>2017/9/1</span>
        </div>
        <button aria-label="显示桌面" className="h-full w-[13px] border border-[#56667c] bg-linear-to-br from-[#b5c1d0] to-[#74859d]" />
      </div>
    </footer>
  );
}

function Watermark() {
  return (
    <div className="pointer-events-none absolute right-1 bottom-1 flex h-[63px] w-[207px] bg-white/25">
      <svg width="70" height="63" viewBox="0 0 70 63" fill="none" className="-mr-2 shrink-0" aria-hidden="true">
        <ellipse cx="22" cy="23" rx="15" ry="21" transform="rotate(-35 22 23)" stroke="#4a6072" strokeOpacity=".6" strokeWidth="3" />
        <path d="M42 22c22 4 18 34-6 34M14 52c8-16 22-22 34-20" stroke="#a8405a" strokeOpacity=".5" strokeWidth="4" />
        <path d="M12 46q20 0 32-20M28 34q10 4 12 16" stroke="#4a6072" strokeOpacity=".5" strokeWidth="2" />
      </svg>
      <div className="flex flex-col">
        <span className="pl-2 text-[29px] leading-[40px] font-bold whitespace-nowrap text-[#1b7c86]">野火论坛</span>
        <span className="text-[14px] leading-[18px] whitespace-nowrap text-[#4c6d96]/70">www.proewildfire.cn</span>
      </div>
    </div>
  );
}

export default function App() {
  return (
    <div className="relative flex min-h-screen flex-col overflow-hidden font-['Noto_Sans','Noto_Sans_CJK_SC',sans-serif]">
      <div className="flex flex-1 bg-[#00479c]">
        <div className="flex flex-1 flex-col rounded-t-md border border-[#1d2c40] bg-[#b5cde6] px-[7px] pb-[7px]">
          <TitleBar />
          <ToolBar />
          <TabRow />
          <Ribbon />
          <MessageBar />
          <main className="flex flex-1 bg-[#d3e2ec]">
            <Sidebar />
            <div className="flex flex-1 flex-col">
              <Canvas />
              <SheetTabs />
            </div>
          </main>
        </div>
        <Desktop />
      </div>
      <Taskbar />
      <Watermark />
    </div>
  );
}
